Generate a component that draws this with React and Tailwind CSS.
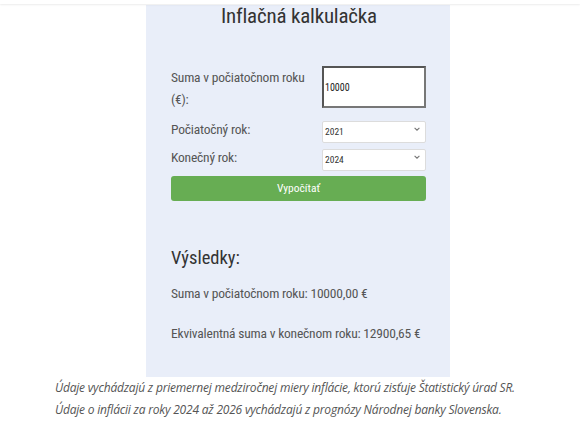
import React from 'react'

function Chevron() {
  return (
    <svg className="absolute right-[5px] top-1/2 -translate-y-1/2 w-[8px] h-[8px]" viewBox="0 0 10 10" fill="none">
      <path d="M2 3.5 L5 6.5 L8 3.5" stroke="#777" strokeWidth="1.4" />
    </svg>
  )
}

function YearSelect({ value, font }) {
  return (
    <div className="relative w-[104px] h-[22px]">
      <select
        defaultValue={value}
        style={font}
        className="appearance-none w-full h-full bg-white border border-[#dcdcdc] rounded-[2px] pl-[2px] text-[9.5px] text-[#333] outline-none font-stretch-[79%]"
      >
        <option>{value}</option>
      </select>
      <Chevron />
    </div>
  )
}

export default function App() {
  const font = { fontFamily: 'Roboto, "Liberation Sans", Arial, sans-serif' }
  return (
    <div className="w-[580px] h-[422px] bg-white overflow-hidden flex flex-col">
      <div className="h-[4px] shrink-0 bg-white shadow-[0_1px_2px_rgba(0,0,0,0.08)] relative z-10" />
      <div className="pl-[55px] mt-[1px] shrink-0">
        <div className="ml-[91px] w-[304px] h-[372px] bg-[#e9eef9] pl-[25px] pr-[24px] font-stretch-[79%]" style={font}>
          <h1 className="text-center text-[21px] leading-[22px] tracking-[-0.2px] text-[#333] font-normal pl-[1px]">
            Inflačná kalkulačka
          </h1>

          <div className="mt-[39px] flex items-start justify-between mb-[8px]">
            <label className="text-[13.5px] leading-[22px] tracking-[-0.2px] text-[#555] w-[148px]">
              Suma v počiatočnom roku (€):
            </label>
            <input
              defaultValue="10000"
              style={font}
              className="w-[104px] h-[42px] bg-white border-2 border-[#555] border-b-[#777] border-r-[#777] pl-[1px] text-[10px] text-[#222] outline-none font-stretch-[79%]"
            />
          </div>

          <div className="flex items-start justify-between mb-[6px]">
            <label className="text-[13.5px] leading-[22px] tracking-[-0.2px] text-[#555]">Počiatočný rok:</label>
            <YearSelect value="2021" font={font} />
          </div>

          <div className="flex items-start justify-between mb-[7px]">
            <label className="text-[13.5px] leading-[22px] tracking-[-0.2px] text-[#555]">Konečný rok:</label>
            <YearSelect value="2024" font={font} />
          </div>

          <button style={font} className="w-full h-[25px] bg-[#67ad53] rounded-[3px] text-white text-[11.5px] font-stretch-[79%]">
            Vypočítať
          </button>

          <h2 className="mt-[45px] text-[18.5px] leading-[24px] text-[#333] font-normal">Výsledky:</h2>
          <p className="mt-[14px] text-[13.5px] leading-[18px] tracking-[-0.2px] text-[#555]">
            Suma v počiatočnom roku: 10000,00 €
          </p>
          <p className="mt-[22px] text-[13.5px] leading-[18px] tracking-[-0.2px] text-[#555] whitespace-nowrap">
            Ekvivalentná suma v konečnom roku: 12900,65 €
          </p>
        </div>
        <div
          className="italic text-[12px] leading-[22px] tracking-[-0.2px] text-[#555] font-stretch-[92%] whitespace-nowrap"
          style={{ fontFamily: '"Open Sans", sans-serif' }}
        >
          <p>Údaje vychádzajú z priemernej medziročnej miery inflácie, ktorú zisťuje Štatistický úrad SR.</p>
          <p>Údaje o inflácii za roky 2024 až 2026 vychádzajú z prognózy Národnej banky Slovenska.</p>
        </div>
      </div>
    </div>
  )
}
